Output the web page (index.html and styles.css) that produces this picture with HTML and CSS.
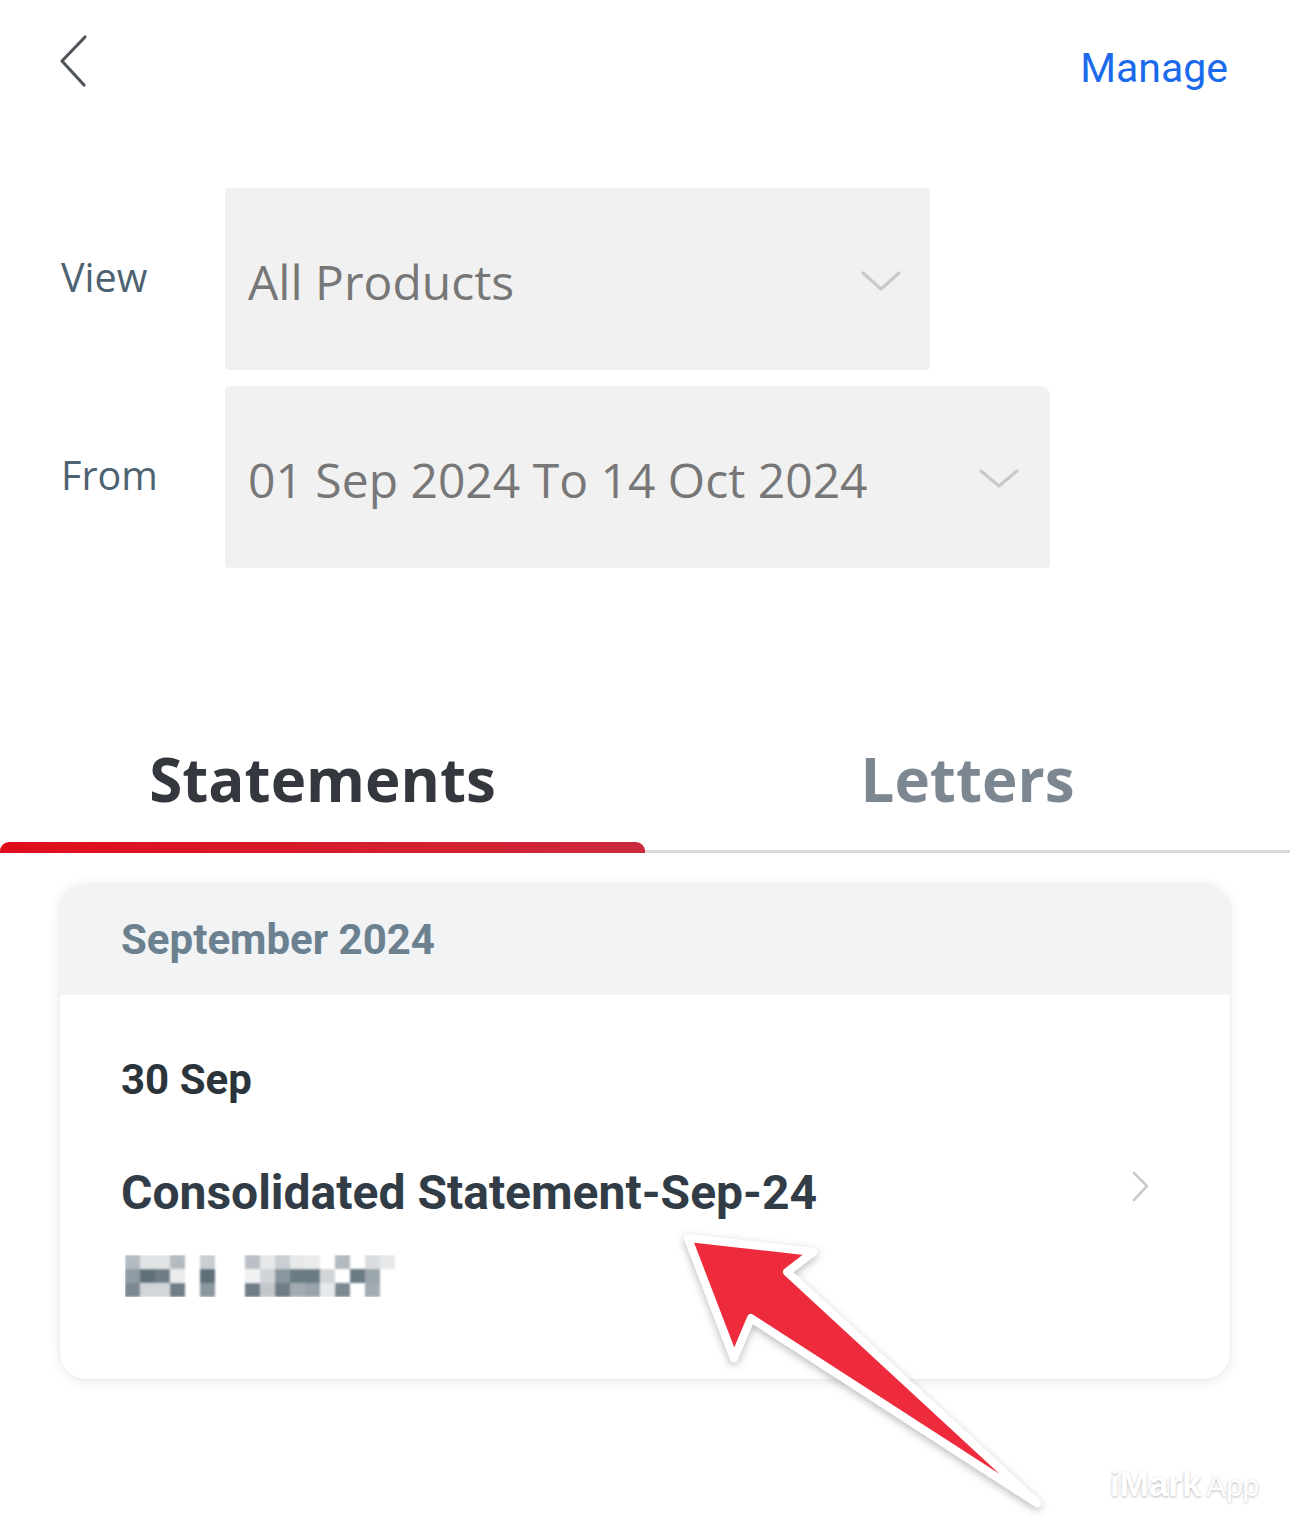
FILE: index.html
```html
<!DOCTYPE html>
<html lang="en">
<head>
<meta charset="utf-8">
<title>Statements</title>
<link rel="stylesheet" href="styles.css">
</head>
<body>
<div class="page">
  <header class="topbar">
    <svg class="back" width="40" height="60" viewBox="0 0 40 60" aria-label="Back">
      <path d="M27 3 L4 27 L26 51" fill="none" stroke="#50555c" stroke-width="3.2" stroke-linecap="round" stroke-linejoin="round"/>
    </svg>
    <a class="manage">Manage</a>
  </header>

  <section class="filters">
    <div class="filter-row">
      <span class="filter-label">View</span>
      <div class="select select-view">
        <span class="select-text">All Products</span>
        <svg class="chev" width="44" height="26" viewBox="0 0 44 26"><path d="M3 4 L21 20 L39 4" fill="none" stroke="#c9c9c9" stroke-width="3.2" stroke-linecap="round" stroke-linejoin="round"/></svg>
      </div>
    </div>
    <div class="filter-row">
      <span class="filter-label">From</span>
      <div class="select select-date">
        <span class="select-text">01 Sep 2024 To 14 Oct 2024</span>
        <svg class="chev" width="44" height="26" viewBox="0 0 44 26"><path d="M3 4 L21 19 L39 4" fill="none" stroke="#c9c9c9" stroke-width="3.2" stroke-linecap="round" stroke-linejoin="round"/></svg>
      </div>
    </div>
  </section>

  <nav class="tabs">
    <div class="tab active">
      <span class="tab-label">Statements</span>
      <div class="indicator"></div>
    </div>
    <div class="tab">
      <span class="tab-label">Letters</span>
      <div class="indicator"></div>
    </div>
  </nav>

  <section class="card">
    <div class="card-head">September 2024</div>
    <div class="card-body">
      <div class="date">30 Sep</div>
      <div class="doc-row">
        <span class="doc-title">Consolidated Statement-Sep-24</span>
        <svg class="chev-right" width="24" height="36" viewBox="0 0 24 36"><path d="M4 3 L17 16 L4 30" fill="none" stroke="#cbcbcb" stroke-width="2.6" stroke-linecap="round" stroke-linejoin="round"/></svg>
      </div>
      <svg class="masked" width="272" height="42" viewBox="0 0 272 42" aria-label="account number hidden">
        <defs><filter id="soft"><feGaussianBlur stdDeviation="1.2"/></filter></defs>
        <g filter="url(#soft)">
          <rect x="0" y="0" width="15" height="14" fill="#b3bbc2"/>
          <rect x="15" y="0" width="15" height="14" fill="#e1e4e7"/>
          <rect x="30" y="0" width="15" height="14" fill="#e1e4e7"/>
          <rect x="45" y="0" width="15" height="14" fill="#b3bbc0"/>
          <rect x="75" y="0" width="15" height="14" fill="#c9ced3"/>
          <rect x="120" y="0" width="15" height="14" fill="#bac0c5"/>
          <rect x="135" y="0" width="15" height="14" fill="#e6e8ea"/>
          <rect x="150" y="0" width="15" height="14" fill="#c9ced3"/>
          <rect x="165" y="0" width="15" height="14" fill="#e6e8ea"/>
          <rect x="180" y="0" width="15" height="14" fill="#e9ebed"/>
          <rect x="210" y="0" width="15" height="14" fill="#b3bbc0"/>
          <rect x="240" y="0" width="15" height="14" fill="#d9dde0"/>
          <rect x="255" y="0" width="15" height="14" fill="#e6e8ea"/>

          <rect x="0" y="14" width="15" height="14" fill="#909ca4"/>
          <rect x="15" y="14" width="15" height="14" fill="#5f6f79"/>
          <rect x="30" y="14" width="15" height="14" fill="#6f7d86"/>
          <rect x="45" y="14" width="15" height="14" fill="#e9ebed"/>
          <rect x="75" y="14" width="15" height="14" fill="#5f6f79"/>
          <rect x="120" y="14" width="15" height="14" fill="#f0f1f2"/>
          <rect x="135" y="14" width="15" height="14" fill="#d1d5d9"/>
          <rect x="150" y="14" width="15" height="14" fill="#8b979f"/>
          <rect x="165" y="14" width="15" height="14" fill="#6b7b85"/>
          <rect x="180" y="14" width="15" height="14" fill="#6b7b85"/>
          <rect x="195" y="14" width="15" height="14" fill="#d1d5d9"/>
          <rect x="225" y="14" width="15" height="14" fill="#6b7b85"/>
          <rect x="240" y="14" width="15" height="14" fill="#9ba5ac"/>

          <rect x="0" y="28" width="15" height="14" fill="#7b8991"/>
          <rect x="15" y="28" width="15" height="14" fill="#d1d5d9"/>
          <rect x="30" y="28" width="15" height="14" fill="#d1d5d9"/>
          <rect x="45" y="28" width="15" height="14" fill="#6f7d86"/>
          <rect x="75" y="28" width="15" height="14" fill="#8b979f"/>
          <rect x="120" y="28" width="15" height="14" fill="#6f7d86"/>
          <rect x="135" y="28" width="15" height="14" fill="#c1c7cb"/>
          <rect x="150" y="28" width="15" height="14" fill="#6f7d86"/>
          <rect x="165" y="28" width="15" height="14" fill="#a1abb1"/>
          <rect x="180" y="28" width="15" height="14" fill="#99a3aa"/>
          <rect x="195" y="28" width="15" height="14" fill="#e6e8ea"/>
          <rect x="210" y="28" width="15" height="14" fill="#7b8991"/>
          <rect x="240" y="28" width="15" height="14" fill="#a1abb1"/>
        </g>
      </svg>
    </div>
  </section>

  <svg class="arrow" width="1290" height="1520" viewBox="0 0 1290 1520" aria-hidden="true">
    <defs>
      <filter id="shadow" x="-10%" y="-10%" width="120%" height="120%">
        <feDropShadow dx="0" dy="3" stdDeviation="4" flood-color="#000" flood-opacity="0.28"/>
      </filter>
    </defs>
    <polygon points="688,1238 813,1252 787,1272 1037,1503 751,1318 734,1358" fill="#ee2a3c" stroke="#ffffff" stroke-width="8" stroke-linejoin="round" filter="url(#shadow)"/>
  </svg>

  <div class="watermark"><span class="wm-big">iMark</span> <span class="wm-small">App</span></div>
</div>
</body>
</html>
```

FILE: styles.css
```css
* { box-sizing: border-box; }

html, body {
  margin: 0;
  padding: 0;
  background: #ffffff;
}

.page {
  position: relative;
  width: 1290px;
  min-height: 1520px;
  overflow: hidden;
  font-family: "Open Sans", "Liberation Sans", sans-serif;
}

.topbar {
  height: 188px;
  display: flex;
  justify-content: space-between;
  align-items: flex-start;
  padding: 34px 62px 0 58px;
}

.back {
  display: block;
}

.manage {
  font-family: Roboto, "Liberation Sans", sans-serif;
  font-size: 41px;
  line-height: 48px;
  color: #1a6aeb;
  margin-top: 10px;
}

.filters {
  display: flex;
  flex-direction: column;
  gap: 16px;
}

.filter-row {
  display: flex;
  align-items: center;
}

.filter-label {
  width: 225px;
  padding-left: 61px;
  font-size: 39.5px;
  color: #4d6372;
  padding-bottom: 4px;
}

.select {
  height: 182px;
  background: #f1f1f1;
  display: flex;
  align-items: center;
  justify-content: space-between;
  padding: 6px 26px 0 23px;
  border-radius: 4px;
}

.select-view { width: 705px; }
.select-date { width: 825px; border-radius: 4px 10px 4px 4px; padding-right: 28px; }

.select-text {
  font-size: 48px;
  color: #777777;
  line-height: 60px;
}

.chev { display: block; }

.tabs {
  display: flex;
  margin-top: 171px;
  background: linear-gradient(#d9d9d9, #d9d9d9) left bottom / 100% 3px no-repeat;
}

.tab {
  flex: 1;
  display: flex;
  flex-direction: column;
  align-items: center;
}

.tab-label {
  font-weight: 700;
  font-size: 60px;
  line-height: 80px;
  color: #7c8792;
  margin-bottom: 23px;
}

.tab.active .tab-label {
  color: #34383e;
}

.indicator {
  width: 100%;
  height: 11px;
}

.tab.active .indicator {
  background: linear-gradient(90deg, #e00d1b, #cb2a3c);
  border-radius: 9px 9px 0 0;
}

.card {
  margin: 31px 0 0 60px;
  width: 1170px;
  border-radius: 26px;
  overflow: hidden;
  background: #ffffff;
  box-shadow: 0 2px 14px rgba(0, 0, 0, 0.09), 0 0 3px rgba(0, 0, 0, 0.05);
  font-family: Roboto, "Liberation Sans", sans-serif;
}

.card-head {
  height: 111px;
  background: #f2f3f5;
  display: flex;
  align-items: center;
  padding-left: 61px;
  font-weight: 700;
  font-size: 42px;
  color: #6b8190;
}

.card-body {
  padding: 60px 76px 82px 61px;
}

.date {
  font-weight: 700;
  font-size: 42px;
  line-height: 50px;
  color: #2b333b;
}

.doc-row {
  margin-top: 58px;
  display: flex;
  align-items: center;
  justify-content: space-between;
  height: 60px;
}

.doc-title {
  font-weight: 700;
  font-size: 48px;
  line-height: 60px;
  color: #313c46;
}

.chev-right {
  display: block;
  margin-top: -10px;
}

.masked {
  display: block;
  margin-top: 32px;
  margin-left: 4px;
}

.arrow {
  position: absolute;
  left: 0;
  top: 0;
  pointer-events: none;
}

.watermark {
  position: absolute;
  left: 1110px;
  top: 1464px;
  font-family: "Liberation Sans", Arial, sans-serif;
  font-weight: 700;
  color: #ffffff;
  text-shadow: 0 1px 3px rgba(0, 0, 0, 0.28);
  white-space: nowrap;
}

.wm-big { font-size: 35px; }
.wm-small { font-size: 30px; font-weight: 400; }
```
